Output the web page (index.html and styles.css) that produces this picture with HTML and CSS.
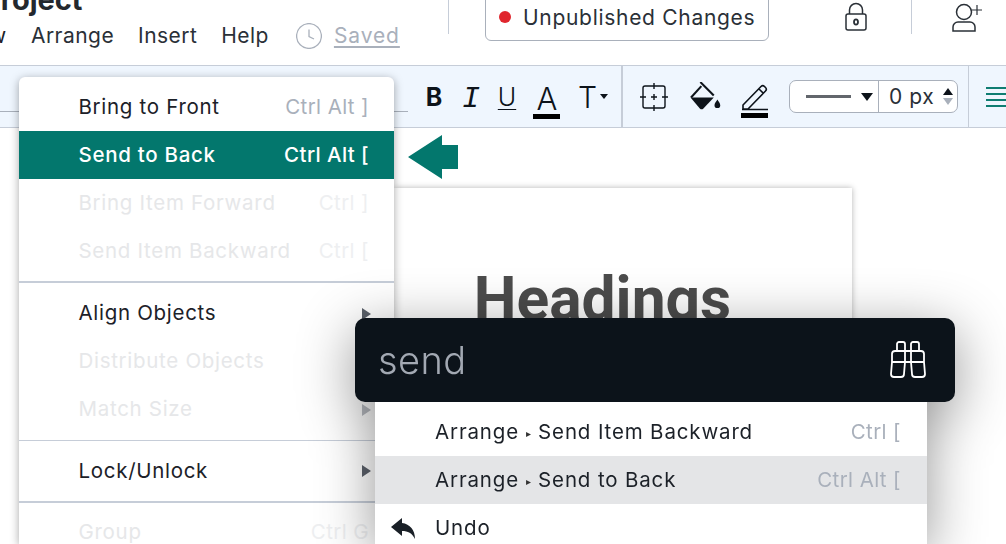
FILE: index.html
```html
<!DOCTYPE html>
<html lang="en">
<head>
<meta charset="utf-8">
<title>Project</title>
<link rel="stylesheet" href="styles.css">
</head>
<body>
<div class="app">
  <header class="header">
    <div class="title-block">
      <div class="title">Project</div>
      <nav class="menubar">
        <span class="menu-cut">w</span>
        <span class="menu-link">Arrange</span>
        <span class="menu-link">Insert</span>
        <span class="menu-link">Help</span>
        <svg class="clock" viewBox="0 0 26 26"><circle cx="13" cy="13" r="12.4"/><path d="M13 6.5V13.5L18 16"/></svg>
        <span class="saved">Saved</span>
      </nav>
    </div>
    <div class="vsep first"></div>
    <div class="status"><span class="dot"></span><span>Unpublished Changes</span></div>
    <svg class="lock" viewBox="0 0 22 29"><path d="M4.500 12V8a6.500 6.500 0 0 1 13 0v4"/><rect x="1" y="12" width="20" height="16" rx="2"/><ellipse class="zero" cx="11" cy="20" rx="2" ry="2.600"/></svg>
    <div class="vsep second"></div>
    <svg class="person" viewBox="0 0 30 29"><circle cx="12" cy="9" r="7.500"/><path d="M1 28V24a5 5 0 0 1 5-5h12a5 5 0 0 1 5 5v4z"/><path class="plus" d="M25 2v10M20 7h10"/></svg>
  </header>

  <div class="toolbar">
    <div class="font-box"></div>
    <span class="tool bold">B</span>
    <span class="tool italic">I</span>
    <span class="tool under">U</span>
    <span class="tool color-a">A<i class="bar"></i></span>
    <span class="tool size-t">T<i class="caret"></i></span>
    <div class="tool-sep"></div>
    <svg class="ico crop" viewBox="0 0 28 28"><rect x="3" y="3" width="22" height="22" rx="2"/><path d="M14 0v6M14 22v6M0 14h6M22 14h6M14 11v6M11 14h6"/></svg>
    <svg class="ico bucket" viewBox="0 0 30 28"><path d="M1 15 11 4" class="outline"/><path d="M10 0 23 13" class="outline"/><path d="M.5 15h22.500L13 25.500a2.500 2.500 0 0 1-3.500 0z"/><path d="M26.500 17c-1 2-2.800 3.500-2.800 5.400a2.800 2.800 0 0 0 5.600 0c0-1.900-1.800-3.400-2.800-5.400z"/></svg>
    <span class="pencil-wrap">
      <svg class="ico pencil" viewBox="0 0 28 28"><path d="M2 26v-4L20 3.500a2.500 2.500 0 0 1 3.500 0l1 1a2.500 2.500 0 0 1 0 3.500L7 26zM18 6l4.500 4.500M1 26.500h26"/></svg>
      <i class="bar wide"></i>
    </span>
    <div class="stroke-box">
      <div class="stroke-pick"><i class="stroke-line"></i><i class="stroke-caret"></i></div>
      <div class="stroke-num"><span>0 px</span><span class="spin"><i class="up"></i><i class="down"></i></span></div>
    </div>
    <div class="tool-sep thin"></div>
    <span class="lines"><i></i><i></i><i></i><i></i></span>
  </div>

  <main class="canvas">
    <div class="page"><h1 class="heading">Headings</h1></div>
  </main>
</div>

<svg class="pointer" viewBox="0 0 50 44"><path d="M0 22 34 0V10H50V34H34V44z"/></svg>

<div class="dropdown">
  <div class="item"><span>Bring to Front</span><span class="keys">Ctrl Alt ]</span></div>
  <div class="item active"><span>Send to Back</span><span class="keys">Ctrl Alt [</span></div>
  <div class="item off"><span>Bring Item Forward</span><span class="keys">Ctrl ]</span></div>
  <div class="item off"><span>Send Item Backward</span><span class="keys">Ctrl [</span></div>
  <hr class="rule">
  <div class="item"><span>Align Objects</span><i class="sub"></i></div>
  <div class="item off"><span>Distribute Objects</span></div>
  <div class="item off"><span>Match Size</span><i class="sub"></i></div>
  <hr class="rule">
  <div class="item"><span>Lock/Unlock</span><i class="sub"></i></div>
  <hr class="rule">
  <div class="item off"><span>Group</span><span class="keys cut">Ctrl G</span></div>
</div>

<div class="palette">
  <div class="search">
    <span class="query">send</span>
    <svg class="binoculars" viewBox="0 0 36 38"><path d="M7 10V3a2 2 0 0 1 2-2h4a2 2 0 0 1 2 2v7M21 10V3a2 2 0 0 1 2-2h4a2 2 0 0 1 2 2v7M2 21V13a3 3 0 0 1 3-3h26a3 3 0 0 1 3 3v8zM15 10v11M21 10v11M2 21 1 33a3 3 0 0 0 3 3h7a3 3 0 0 0 3-3l1-12M21 21l1 12a3 3 0 0 0 3 3h7a3 3 0 0 0 3-3l-1-12"/></svg>
  </div>
  <div class="results">
    <div class="result"><span>Arrange <small>▸</small> Send Item Backward</span><span class="keys">Ctrl [</span></div>
    <div class="result hover"><span>Arrange <small>▸</small> Send to Back</span><span class="keys">Ctrl Alt [</span></div>
    <div class="result undo">
      <svg class="undo-ico" viewBox="0 0 26 22"><path d="M11 0 0 9l11 9v-5c6 0 10 2 13 8 0-9-5-15-13-16z"/></svg>
      <span>Undo</span>
    </div>
  </div>
</div>
</body>
</html>
```
FILE: styles.css
```css
* { box-sizing: border-box; }
html, body { margin: 0; height: 100%; overflow: hidden; background: #fff; }
body { font-family: "Inter", "Noto Sans", sans-serif; color: #1c2128; font-size: 20.5px; width: 1006px; height: 544px; position: relative; }
i { display: block; }

.app { display: flex; flex-direction: column; height: 544px; overflow: hidden; }

.header { height: 66px; flex: none; display: flex; align-items: flex-start; border-bottom: 1px solid #c6cdd8; position: relative; }
.title-block { width: 448px; flex: none; }
.title { font: 700 29px/32px "Inter", sans-serif; margin-top: -16px; color: #24282e; margin-left: -18px; height: 30px; }
.menubar { display: flex; align-items: center; height: 35px; margin-top: 4px; font-size: 21px; }
.menu-cut { width: 31px; margin: 0 11px 0 -11px; text-align: left; letter-spacing: .3px; flex: none; }
.menu-link { margin-right: 24px; letter-spacing: .45px; font-weight: 400; color: #2a3037; }
.clock { width: 26px; height: 26px; fill: none; stroke: #a9b0bb; stroke-width: 1.300; margin-right: 12px; margin-left: 3px; flex: none; }
.saved { color: #a9b0bb; text-decoration: underline; text-underline-offset: 3px; letter-spacing: .9px; }

.vsep { width: 1px; height: 34px; background: #c6cdd8; flex: none; }
.vsep.first { margin-right: 36px; }
.vsep.second { margin: 0 40px 0 44px; }
.status { width: 284px; height: 42px; margin-top: -1px; display: flex; align-items: center; gap: 12px; padding: 0 0 6px 13px; border: 1px solid #a9b0bb; border-radius: 0 0 6px 6px; font-size: 21px; letter-spacing: .7px; flex: none; color: #2a3037; }
.dot { width: 12px; height: 12px; background: #e0262e; border-radius: 50%; flex: none; }
.lock { width: 22px; height: 29px; margin: 2px 0 0 76px; fill: none; stroke: #2a3037; stroke-width: 1.500; flex: none; }
.zero { stroke-width: 1.800; }
.person { width: 30px; height: 29px; margin-top: 3px; fill: none; stroke: #2a3037; stroke-width: 1.500; flex: none; }
.plus { stroke-width: 1.200; }

.toolbar { height: 62px; flex: none; display: flex; align-items: center; background: #eff6fe; border-bottom: 1px solid #c6cdd8; position: relative; }
.font-box { width: 408px; height: 46px; align-self: flex-start; border-bottom: 1px solid #a9b0bb; flex: none; }
.tool { flex: none; text-align: center; position: relative; color: #0d131a; }
.bold { width: 50px; font: 700 25px/30px "Inter", sans-serif; margin-left: 1px; }
.italic { width: 24px; font: italic 400 30px/30px "Liberation Mono", monospace; margin-top: 4px; }
.under { width: 48px; font: 300 25px/30px "Inter", sans-serif; text-decoration: underline; text-decoration-thickness: 1px; text-underline-offset: 3px; }
.color-a { width: 34px; font: 300 31px/38px "Inter", sans-serif; height: 42px; padding-top: 3px; margin-top: 2px; margin-left: -1px; }
.bar { position: absolute; left: 3px; bottom: 0; width: 27px; height: 5px; background: #000; }
.size-t { width: 32px; margin-left: 14px; font: 300 30px/36px "Inter", sans-serif; text-align: left; height: 36px; }
.caret { position: absolute; right: 2px; top: 15px; border: 4px solid transparent; border-top: 5px solid #0d131a; border-bottom: 0; }
.tool-sep { width: 2px; height: 61px; margin-left: 11px; background: #c6cdd8; flex: none; }
.ico { flex: none; fill: none; stroke: #0d131a; stroke-width: 1.600; }
.crop { width: 28px; height: 28px; margin-left: 17px; stroke-width: 1.400; }
.bucket { width: 31px; height: 29px; margin-left: 22px; fill: #0d131a; stroke: none; }
.bucket .outline { fill: none; stroke: #0d131a; stroke-width: 2; }
.pencil-wrap { width: 28px; height: 43px; margin: 3px 0 0 20px; position: relative; flex: none; }
.pencil { width: 28px; height: 28px; display: block; margin-top: 6px; }
.bar.wide { left: 0; bottom: 2px; }
.stroke-box { width: 169px; height: 33px; margin-left: 20px; display: flex; background: #fff; border: 1px solid #a9b0bb; border-radius: 7px; flex: none; }
.stroke-pick { width: 89px; display: flex; align-items: center; border-right: 1px solid #a9b0bb; padding-left: 16px; }
.stroke-line { width: 45px; height: 2.500px; background: #62666c; }
.stroke-caret { margin-left: 10px; border: 6px solid transparent; border-top: 8px solid #0d131a; border-bottom: 0; }
.stroke-num { display: flex; align-items: center; padding-left: 10px; gap: 9px; font-size: 21px; letter-spacing: .6px; color: #2a3037; }
.spin { display: flex; flex-direction: column; gap: 3px; }
.up { border: 5px solid transparent; border-bottom: 7px solid #0d131a; border-top: 0; }
.down { border: 5px solid transparent; border-top: 7px solid #a9b0bb; border-bottom: 0; }
.tool-sep.thin { width: 1px; margin-left: 10px; }
.lines { width: 20px; margin-left: 17px; display: flex; flex-direction: column; gap: 4px; flex: none; }
.lines i { height: 2px; background: #0f7d72; width: 24px; }

.canvas { flex: 1; background: #fff; padding: 60px 0 0 394px; }
.page { width: 458px; height: 400px; background: #fff; box-shadow: 0 0 6px rgba(0,0,0,.3); }
.heading { margin: 0; padding: 75px 41px 0 0; text-align: center; font: 700 60.500px/74px "Roboto", sans-serif; color: #4c4c4c; }

.pointer { position: absolute; left: 408px; top: 135px; width: 50px; height: 44px; fill: #03776d; }

.dropdown { position: absolute; left: 19px; top: 77px; width: 375px; height: 467px; overflow: hidden; padding-top: 6px; background: #fff; border-radius: 6px 6px 0 0; box-shadow: 0 2px 10px rgba(0,0,0,.35); clip-path: inset(-14px -14px 0 -14px); }
.item { height: 48px; display: flex; align-items: center; justify-content: space-between; padding: 0 25px 2px 59.500px; letter-spacing: .7px; color: #1c2128; position: relative; flex: none; }
.item .keys { color: #a9b0bb; letter-spacing: .4px; }
.item.active { background: #03776d; color: #fff; font-weight: 500; }
.item.active .keys { color: #fff; }
.item.off { color: #e6e7e9; }
.item.off .keys { color: #eeeff1; }
.rule { margin: 6px 0; height: 1.600px; border: 0; background: #c6cdd8; }
.rule:first-of-type { margin-bottom: 7px; }
.sub { position: absolute; right: 23px; top: 18px; border: 5px solid transparent; border-left: 9px solid #5c626b; border-right: 0; border-top-width: 6px; border-bottom-width: 6px; }
.off .sub { border-left-color: #b9bcc2; }

.palette { position: absolute; left: 355px; top: 318px; width: 600px; height: 226px; filter: drop-shadow(0 12px 28px rgba(0,0,0,.42)); }
.search { height: 84px; background: #0c131a; border-radius: 10px; display: flex; align-items: center; justify-content: space-between; padding: 0 29px 0 24px; }
.query { font-size: 38px; font-weight: 300; color: #a3a9b3; letter-spacing: .4px; margin-left: -1px; }
.binoculars { width: 36px; height: 38px; fill: none; stroke: #fff; stroke-width: 1.800; }
.results { margin-left: 20px; width: 552px; height: 142px; overflow: hidden; padding-top: 6px; background: #fff; border-radius: 0; }
.result { height: 48px; display: flex; align-items: center; justify-content: space-between; padding: 0 26px 2px 60px; letter-spacing: .85px; color: #1c2128; position: relative; }
.result small { font-size: 10px; vertical-align: 2px; color: #333; }
.result .keys { color: #a9b0bb; letter-spacing: .4px; }
.result.hover { background: #e4e5e7; }
.result.undo { justify-content: flex-start; }
.undo-ico { position: absolute; left: 16px; top: 14px; width: 26px; height: 22px; fill: #1a2027; }
```
